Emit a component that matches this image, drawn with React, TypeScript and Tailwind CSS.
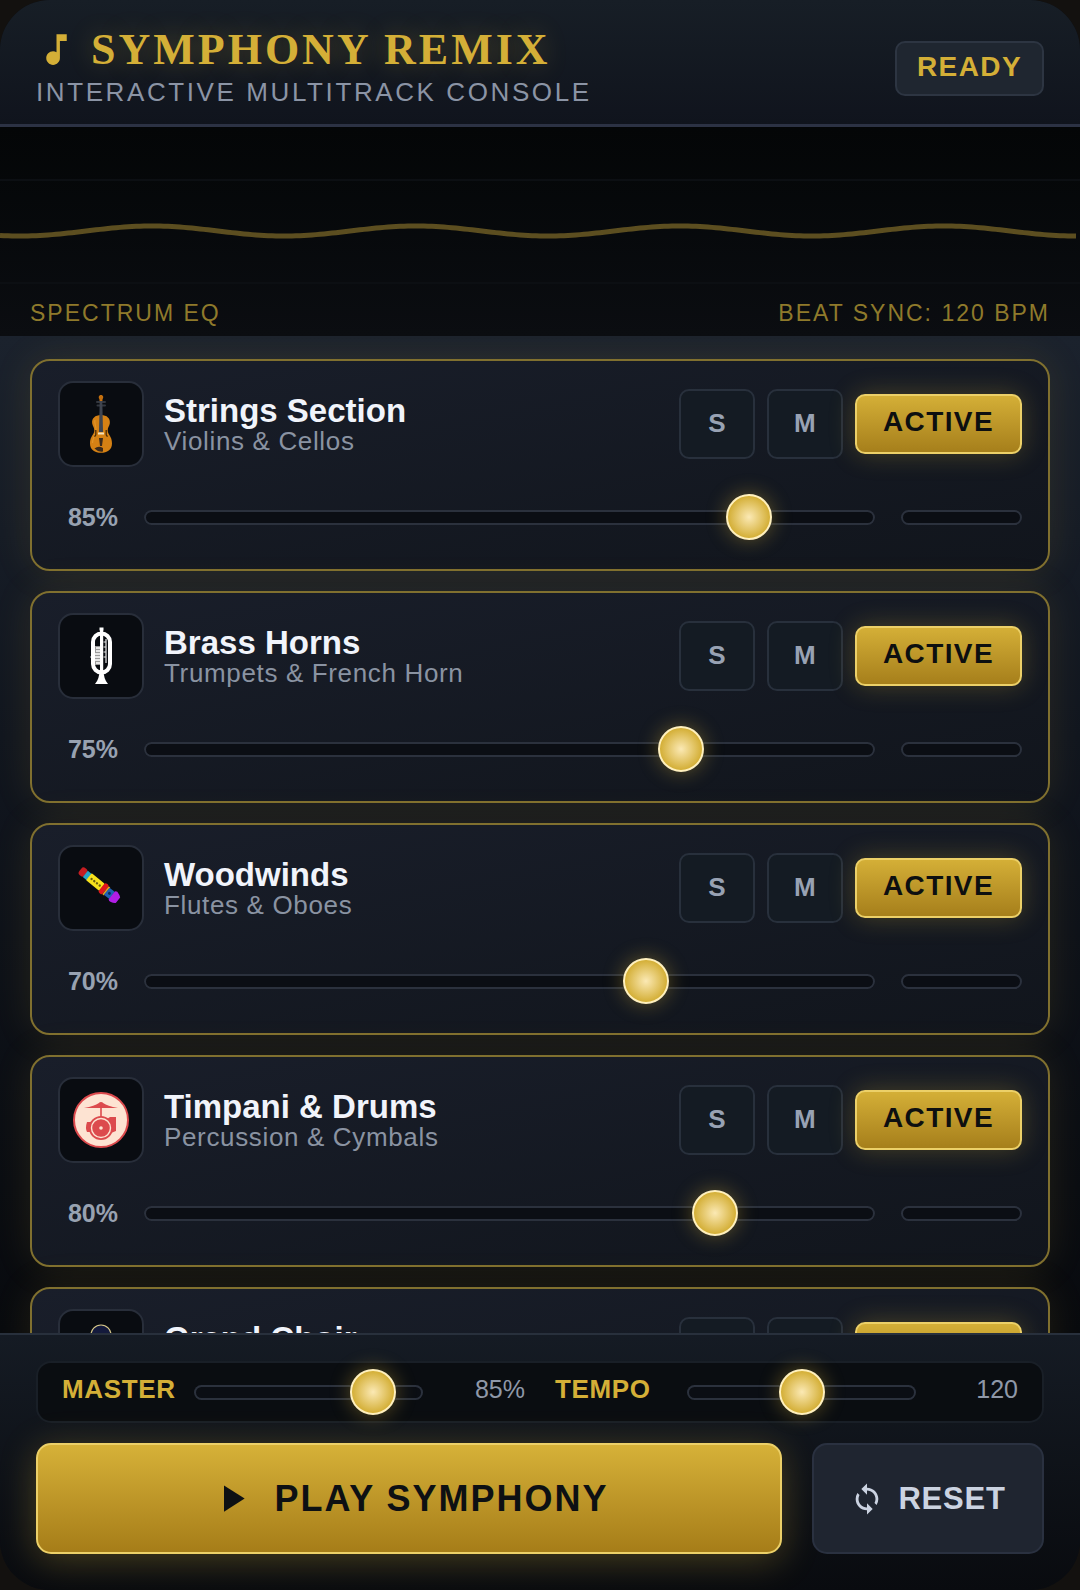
import React, { useState } from 'react'
import { MdMusicNote, MdPlayArrow, MdSync } from 'react-icons/md'

const ViolinIcon: React.FC = () => (
  <svg viewBox="0 0 60 60" className="w-[60px] h-[60px]" aria-hidden="true">
    <path
      d="M30 21C24 21 20.500 24.500 21.200 29.500C21.600 32 23.300 33 23.300 36.500C23.300 40.500 19 42 19 49.500C19 56 24 58.800 30 58.800C36 58.800 41 56 41 49.500C41 42 36.700 40.500 36.700 36.500C36.700 33 38.400 32 38.800 29.500C39.500 24.500 36 21 30 21Z"
      fill="#d58114"
    />
    <path d="M24 26C23 29 25 31 25 36C25 42 21.500 43 21.500 49" fill="none" stroke="#e2942a" strokeWidth="1.200" />
    <path d="M24.800 36v4.500q-.2 1.800-1.600 1.600M35.200 36v4.500q.2 1.800 1.600 1.600" fill="none" stroke="#4a2c08" strokeWidth="1.300" />
    <path d="M26 8h8M26.500 11.500h7.500" stroke="#33373f" strokeWidth="2" strokeLinecap="round" />
    <path d="M28.700 7h2.600l.7 31h-4z" fill="#3f4550" />
    <path d="M30 1c2.400 0 2.800 2.600 1.600 4l-.2 2h-2.800l-.2-2C27.200 3.600 27.600 1 30 1z" fill="#c4700f" />
    <path d="M27 39.500h6" stroke="#f7e3bb" strokeWidth="2" />
    <path d="M28 44h4L31 52h-2z" fill="#3a2a1c" />
    <path d="M23.500 54.500q4-3 8.500-.5v3.500q-5 .8-8.500-3z" fill="#3a2a1c" />
  </svg>
)

const TrumpetIcon: React.FC = () => (
  <svg viewBox="0 0 60 60" className="w-[60px] h-[60px]" aria-hidden="true">
    <rect x="22" y="7.500" width="17" height="39" rx="8.500" fill="none" stroke="#fff" strokeWidth="4" />
    <path d="M28.500 1.500h4v3h-4zM29 4h3.200v43H29z" fill="#fff" />
    <path d="M28.500 44h4q0 9 4.500 14H24q4.500-5 4.500-14z" fill="#fff" />
    <path d="M24 20h5v19h-5z" fill="#9b9b9b" />
    <path d="M20 28h9M19.500 31h10M20 34h9M25 22h4M25 25h4M25 37h4" stroke="#fff" strokeWidth="1.600" />
    <path d="M35 13v24M32.500 16h3M32.500 21h3M32.500 26h3M32.500 31h3" stroke="#e8e8e8" strokeWidth="1.200" />
  </svg>
)

const FluteIcon: React.FC = () => (
  <svg viewBox="0 0 60 60" className="w-[60px] h-[60px]" aria-hidden="true">
    <g transform="translate(12 14) rotate(39)">
      <rect x="-3.500" y="-4.500" width="7" height="9" rx="3" fill="#c51d22" />
      <rect x="3" y="-4" width="5" height="8" fill="#27a5c9" />
      <rect x="7.500" y="-4.500" width="17" height="9" rx="1" fill="#f6e21c" />
      <circle cx="11" cy="0" r="1.200" fill="#6b5f10" />
      <circle cx="14.500" cy="0" r="1.200" fill="#6b5f10" />
      <circle cx="18" cy="0" r="1.200" fill="#6b5f10" />
      <circle cx="21.500" cy="0" r="1.200" fill="#6b5f10" />
      <rect x="24" y="-6" width="5" height="12" rx="2" fill="#e0161b" />
      <rect x="29" y="-5" width="2" height="10" fill="#e8a11a" />
      <rect x="30.500" y="-4.500" width="7" height="9" fill="#1f62b5" />
      <circle cx="34" cy="0" r="1.500" fill="#0d2c5c" />
      <path d="M37 -5q2-2 3.500-.8 3 .6 4.500 2.300v7q-1.500 1.700-4.500 2.300Q39 7 37 5z" fill="#b01ee6" />
    </g>
  </svg>
)

const DrumIcon: React.FC = () => (
  <svg viewBox="0 0 60 60" className="w-[60px] h-[60px]" aria-hidden="true">
    <circle cx="30" cy="30" r="27" fill="#fde3d2" stroke="#dc4a4d" strokeWidth="2" />
    <path d="M13 18Q24 16 27.500 13.200Q30 11 32.500 13.200Q36 16 47 18z" fill="#dc4a4d" />
    <path d="M30 16v12" stroke="#dc4a4d" strokeWidth="1.600" />
    <path d="M36 29l3-2h6v14l-5 2zM20 32h-4q-2 6 0 10h5z" fill="#dc4a4d" />
    <circle cx="30" cy="38" r="12" fill="#dc4a4d" />
    <circle cx="30" cy="38" r="9.500" fill="none" stroke="#fde3d2" strokeWidth="1.400" />
    <circle cx="30" cy="38" r="1.800" fill="#fde3d2" />
  </svg>
)

const ChoirIcon: React.FC = () => (
  <svg viewBox="0 0 60 60" className="w-[60px] h-[60px]" aria-hidden="true">
    <circle cx="30" cy="13" r="10" fill="#141a3c" stroke="#d8c98a" strokeWidth="1.200" />
    <path d="M12 58q0-28 18-32 18 4 18 32z" fill="#232c5c" />
  </svg>
)

const TRACKS = [
  { name: 'Strings Section', detail: 'Violins & Cellos', volume: 85, Icon: ViolinIcon },
  { name: 'Brass Horns', detail: 'Trumpets & French Horn', volume: 75, Icon: TrumpetIcon },
  { name: 'Woodwinds', detail: 'Flutes & Oboes', volume: 70, Icon: FluteIcon },
  { name: 'Timpani & Drums', detail: 'Percussion & Cymbals', volume: 80, Icon: DrumIcon },
  { name: 'Grand Choir', detail: 'Vocal Ensemble', volume: 65, Icon: ChoirIcon },
]

const SLIDER =
  'block flex-1 min-w-0 h-[15px] appearance-none rounded-full bg-[#0b0e14] shadow-[inset_0_0_0_2px_#2b313d] outline-none cursor-pointer ' +
  '[&::-webkit-slider-thumb]:appearance-none [&::-webkit-slider-thumb]:w-[46px] [&::-webkit-slider-thumb]:h-[46px] [&::-webkit-slider-thumb]:rounded-full ' +
  '[&::-webkit-slider-thumb]:border-2 [&::-webkit-slider-thumb]:border-[#fff0bd] ' +
  '[&::-webkit-slider-thumb]:bg-[radial-gradient(circle,#fbe9b4_0%,#d4af37_70%)] ' +
  '[&::-webkit-slider-thumb]:shadow-[0_0_20px_rgba(212,175,55,0.4)]'

interface SliderProps {
  label: string
  value: number
  min?: number
  max?: number
  onChange: (value: number) => void
}

const Slider: React.FC<SliderProps> = ({ label, value, min = 0, max = 100, onChange }) => (
  <input
    type="range"
    aria-label={label}
    min={min}
    max={max}
    value={value}
    onChange={(e) => onChange(Number(e.target.value))}
    className={SLIDER}
  />
)

const wavePoints = Array.from({ length: 270 }, (_, i) => {
  const x = i * 4
  const y = 104 + 5 * Math.cos(((x - 20) / 264) * Math.PI * 2)
  return `${x},${y.toFixed(2)}`
}).join(' ')

const Visualizer: React.FC = () => (
  <section className="relative h-[209px] bg-gradient-to-b from-[#040607] to-[#0b0d11]">
    <svg viewBox="0 0 1080 209" preserveAspectRatio="none" className="block w-full h-full" aria-hidden="true">
      <path d="M0 53H1080M0 156H1080" stroke="#0c0f13" strokeWidth="2" />
      <polyline points={wavePoints} fill="none" stroke="#5c4e20" strokeWidth="5" />
    </svg>
    <div className="absolute inset-x-0 bottom-2 px-[30px] flex justify-between text-[23px] leading-[30px] tracking-[2px] text-[#8f7a2b]">
      <span>SPECTRUM EQ</span>
      <span>BEAT SYNC: 120 BPM</span>
    </div>
  </section>
)

const SmallButton: React.FC<{ label: string; children: React.ReactNode }> = ({ label, children }) => (
  <button
    type="button"
    aria-label={label}
    className="w-[76px] h-[70px] pb-0.5 rounded-[10px] border-2 border-[#28303c] bg-[#141b23] text-[26px] leading-none font-bold text-[#98a2b3]"
  >
    {children}
  </button>
)

const TrackCard: React.FC<{ track: (typeof TRACKS)[number] }> = ({ track }) => {
  const [volume, setVolume] = useState(track.volume)
  const [active, setActive] = useState(true)
  const { Icon } = track

  return (
    <article className="shrink-0 flex flex-col gap-5 px-[26px] pt-5 pb-[22px] rounded-[20px] border-2 border-[#80702f] bg-gradient-to-br from-[#191e2a] to-[#11151c] shadow-[0_0_38px_rgba(212,175,55,0.12)]">
      <div className="flex items-center justify-between">
        <div className="flex items-center gap-5">
          <div className="w-[86px] h-[86px] flex items-center justify-center rounded-[15px] border-2 border-[#282e3a] bg-[#090c11]">
            <Icon />
          </div>
          <div>
            <h2 className="text-[33px] leading-[33px] font-bold text-[#f1f4fb]">{track.name}</h2>
            <p className="text-[26px] leading-7 tracking-wide text-[#8a93a2]">{track.detail}</p>
          </div>
        </div>
        <div className="flex items-center gap-3">
          <SmallButton label={`Solo ${track.name}`}>S</SmallButton>
          <SmallButton label={`Mute ${track.name}`}>M</SmallButton>
          <button
            type="button"
            aria-pressed={active}
            onClick={() => setActive(!active)}
            className="h-[60px] px-[26px] pb-1 rounded-[10px] border-2 border-[#ecd068] bg-gradient-to-b from-[#d4af37] to-[#a67f1b] text-[28px] leading-none font-bold tracking-wider text-[#0d0f10] shadow-[0_0_26px_rgba(212,175,55,0.28)]"
          >
            ACTIVE
          </button>
        </div>
      </div>
      <div className="flex items-center h-[60px] gap-[26px]">
        <span className="w-[60px] text-right text-[25px] leading-none font-bold text-[#98a2b1]">{volume}%</span>
        <Slider label={`${track.name} volume`} value={volume} onChange={setVolume} />
        <div className="w-[121px] h-[15px] rounded-full border-2 border-[#2b313d] bg-[#0b0e14]" />
      </div>
    </article>
  )
}

const App: React.FC = () => {
  const [master, setMaster] = useState(85)
  const [tempo, setTempo] = useState(120)

  return (
    <div className="h-screen bg-[#13110f] font-['Liberation_Sans',Arial,sans-serif]">
      <main className="h-full flex flex-col overflow-hidden rounded-[50px] bg-[#0a0d12]">
        <header className="shrink-0 flex items-center justify-between px-9 pt-[26px] pb-[13px] border-b-3 border-[#2c3244] bg-gradient-to-b from-[#171e26] to-[#10141d]">
          <div>
            <h1 className="flex items-center gap-3.5 text-[44px] leading-[47px] font-bold tracking-[3px] text-[#d4af37] font-['Liberation_Serif',serif] [text-shadow:0_0_26px_rgba(212,175,55,0.3)]">
              <MdMusicNote size={41} aria-hidden="true" />
              SYMPHONY REMIX
            </h1>
            <p className="text-[26px] leading-[38px] tracking-widest text-[#8b94a5]">INTERACTIVE MULTITRACK CONSOLE</p>
          </div>
          <div className="px-5 pt-2 pb-3 rounded-[10px] border-2 border-[#2d3542] bg-[#1f2630] text-[28px] leading-[31px] font-bold tracking-wider text-[#d4af37]">
            READY
          </div>
        </header>

        <Visualizer />

        <section className="flex-1 min-h-0 overflow-y-auto [scrollbar-width:none] flex flex-col gap-5 px-[30px] pt-[23px] pb-5 bg-gradient-to-b from-[#1b222d] via-[#11161f] via-40% to-[#080a0e]">
          {TRACKS.map((track) => (
            <TrackCard key={track.name} track={track} />
          ))}
        </section>

        <footer className="shrink-0 flex flex-col gap-5 px-9 pt-[26px] pb-9 border-t-2 border-[#28303c] bg-gradient-to-b from-[#151b24] to-[#090b0f]">
          <div className="h-[62px] grid grid-cols-2 gap-[30px] px-6 rounded-[15px] border-2 border-[#191f27] bg-[#0a0d11]">
            <div className="flex items-center gap-4">
              <span className="w-[116px] pb-1.5 text-[26px] leading-8 font-bold tracking-wide text-[#d4af37]">MASTER</span>
              <Slider label="Master volume" value={master} onChange={setMaster} />
              <span className="w-[86px] pb-1.5 text-right text-[25px] leading-8 text-[#8f98a8]">{master}%</span>
            </div>
            <div className="flex items-center gap-4">
              <span className="w-[116px] pb-1.5 text-[26px] leading-8 font-bold tracking-wide text-[#d4af37]">TEMPO</span>
              <Slider label="Tempo" value={tempo} min={60} max={180} onChange={setTempo} />
              <span className="w-[86px] pb-1.5 text-right text-[25px] leading-8 text-[#8f98a8]">{tempo}</span>
            </div>
          </div>
          <div className="flex gap-[30px] h-[111px]">
            <button
              type="button"
              className="flex-1 flex items-center justify-center gap-5 rounded-[15px] border-2 border-[#ecd068] bg-gradient-to-b from-[#d6b138] to-[#a67d18] text-[36px] leading-none font-bold tracking-[2px] text-[#0d1013] shadow-[0_6px_36px_rgba(212,175,55,0.3)]"
            >
              <MdPlayArrow size={45} aria-hidden="true" />
              PLAY SYMPHONY
            </button>
            <button
              type="button"
              className="w-[232px] flex items-center justify-center gap-3.5 rounded-[15px] border-2 border-[#2a3140] bg-[#1f2530] text-[31px] leading-none font-bold tracking-wide text-[#cbd3e1]"
            >
              <MdSync size={34} aria-hidden="true" />
              RESET
            </button>
          </div>
        </footer>
      </main>
    </div>
  )
}

export default App
